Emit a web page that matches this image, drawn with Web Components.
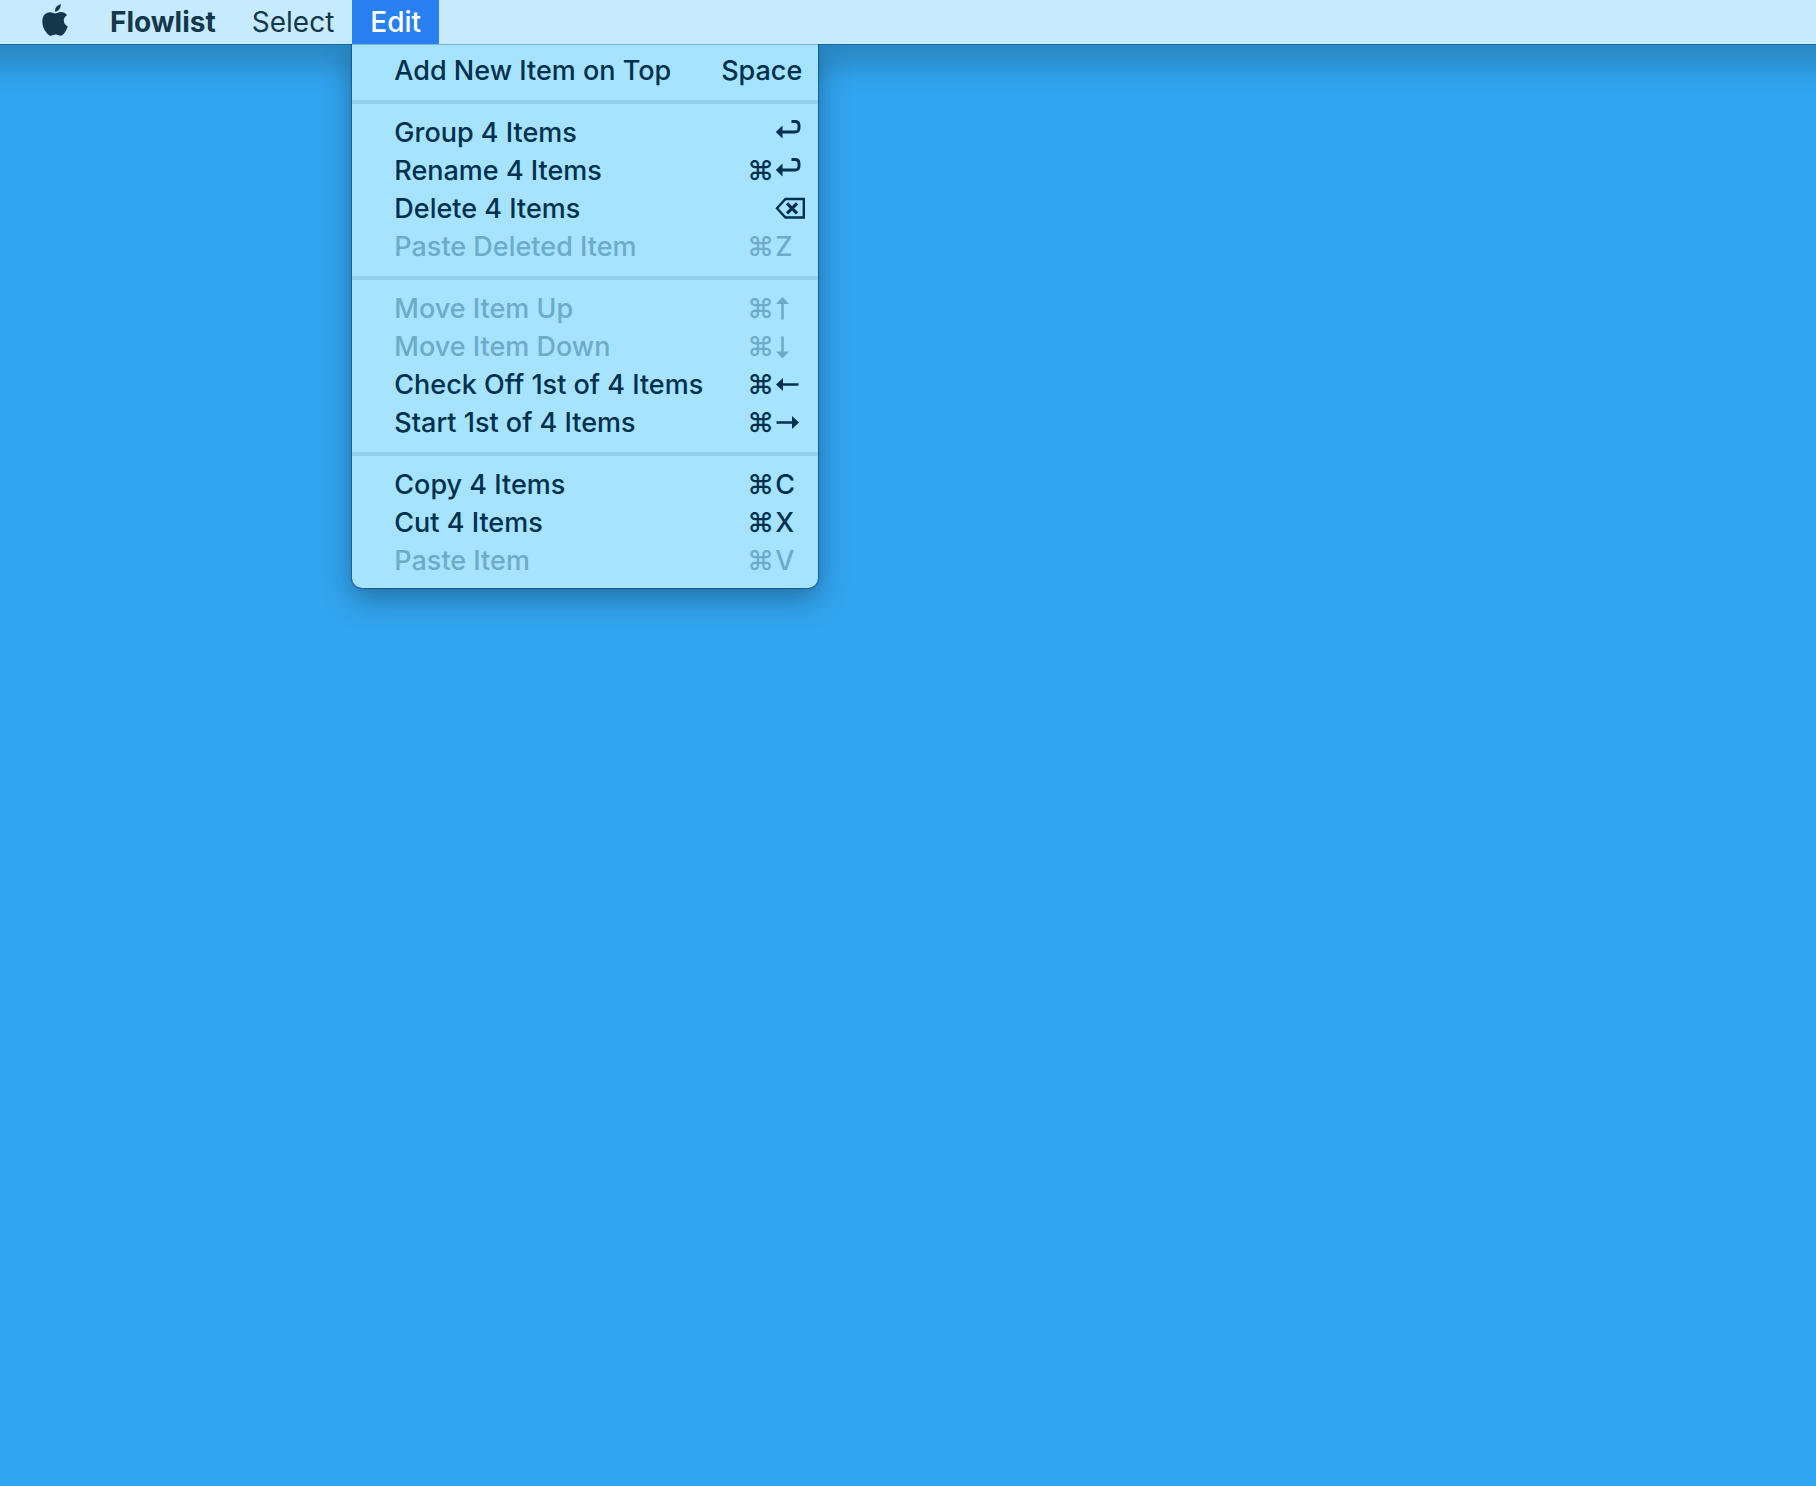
<!DOCTYPE html>
<html lang="en">
<head>
<meta charset="utf-8">
<title>Flowlist</title>
<style>
  html, body { height: 100%; }
  body {
    margin: 0;
    background: #32a5f0;
    font-family: Inter, "Liberation Sans", sans-serif;
    font-size: 28px;
    line-height: 38px;
    overflow: hidden;
  }
</style>
</head>
<body>
<menu-bar>
  <bar-item label="Apple"><apple-mark></apple-mark></bar-item>
  <bar-item class="app" strong>Flowlist</bar-item>
  <bar-item>Select</bar-item>
  <bar-item open>Edit
    <drop-menu slot="menu">
      <menu-command key="Space">Add New Item on Top</menu-command>
      <menu-divider></menu-divider>
      <menu-command icon="return">Group 4 Items</menu-command>
      <menu-command mod icon="return">Rename 4 Items</menu-command>
      <menu-command icon="delete">Delete 4 Items</menu-command>
      <menu-command mod key="Z" disabled>Paste Deleted Item</menu-command>
      <menu-divider></menu-divider>
      <menu-command mod icon="up" disabled>Move Item Up</menu-command>
      <menu-command mod icon="down" disabled>Move Item Down</menu-command>
      <menu-command mod icon="left">Check Off 1st of 4 Items</menu-command>
      <menu-command mod icon="right">Start 1st of 4 Items</menu-command>
      <menu-divider></menu-divider>
      <menu-command mod key="C">Copy 4 Items</menu-command>
      <menu-command mod key="X">Cut 4 Items</menu-command>
      <menu-command mod key="V" disabled>Paste Item</menu-command>
    </drop-menu>
  </bar-item>
</menu-bar>

<script>
const define = (name, render) => customElements.define(name, class extends HTMLElement {
  connectedCallback() {
    if (this.shadowRoot) return;
    this.attachShadow({ mode: 'open' }).innerHTML = render(this);
  }
});

define('menu-bar', () => `
  <style>
    :host {
      display: block;
      background: #c6ebff;
      color: #14384b;
      box-shadow: 0 1px 0 rgba(0, 30, 60, .3), 0 0 24px 24px rgba(0, 0, 0, .17);
    }
    nav { display: flex; height: 44px; padding-left: 24px; }
  </style>
  <nav aria-label="Menu bar"><slot></slot></nav>`);

define('bar-item', el => `
  <style>
    :host { display: block; position: relative; }
    button {
      display: flex; align-items: center;
      height: 44px; padding: 0 18px;
      border: 0; background: none; color: inherit;
      font: inherit; white-space: nowrap;
    }
    :host([strong]) button { font-weight: 700; }
    :host([open]) button { background: #2981f1; color: #fff; font-weight: 500; }
    ::slotted([slot="menu"]) { position: absolute; top: 44px; left: 0; }
  </style>
  <button type="button" ${el.hasAttribute('label') ? `aria-label="${el.getAttribute('label')}"` : ''}
    aria-haspopup="menu" aria-expanded="${el.hasAttribute('open')}"><slot></slot></button>
  <slot name="menu"></slot>`);

define('apple-mark', () => `
  <style>:host { display: block; padding: 0 6px 4px 0; } svg { display: block; fill: currentColor; }</style>
  <svg width="26" height="32" viewBox="0 0 26 32" aria-hidden="true">
    <path d="M18.8 .2c.2 2-.6 3.800-1.700 5.200-1.200 1.400-2.700 2.200-4.200 2.100-.1-1.900.7-3.700 1.800-5C15.900 1.200 17.500.4 18.800.2z"/>
    <path d="M25 11.200c-2 1.300-3.200 3-3.200 5.300 0 2.800 1.700 4.900 4 5.800-.6 2.100-1.700 4.200-3 6.100-1.200 1.700-2.400 3.300-4.400 3.300-1.900 0-2.500-1.100-4.800-1.100-2.200 0-3 1.100-4.800 1.100-2 .1-3.400-1.800-4.600-3.500C2.200 25.600.3 22 .3 17.400.3 12 3.600 8.300 7.900 8.300c2.100 0 3.800 1.200 5.200 1.200 1.300 0 3.400-1.400 6-1.400 2.200.1 4.500 1 5.900 3.100z"/>
  </svg>`);

define('drop-menu', () => `
  <style>
    :host {
      display: block; box-sizing: border-box;
      min-width: 466px; padding: 7px 0 8px;
      border-top: 1px solid #7ab6d3;
      border-radius: 0 0 10px 10px;
      background: #a5e3ff; color: #00304d;
      font-size: 27px; font-weight: 500;
      box-shadow: 0 0 1px 1px rgba(0, 30, 60, .4), 0 10px 30px rgba(0, 0, 0, .34);
      clip-path: inset(0 -60px -60px -60px);
    }
  </style>
  <div role="menu" aria-label="Edit"><slot></slot></div>`);

define('menu-divider', () => `
  <style>:host { display: block; height: 4px; margin: 10px 0; background: #95d1ed; }</style>`);

define('key-icon', el => {
  const shapes = {
    up: '<path d="M7.500 3v19.500" stroke-width="2.600"/><path class="f" d="M1 7 7.500 0 14 7z"/>',
    down: '<path d="M7.500 1.500v19.500" stroke-width="2.600"/><path class="f" d="M1 16.500 7.500 23.500 14 16.500z"/>',
    left: '<path d="M5 11.500h18.500" stroke-width="2.600"/><path class="f" d="M8 5 1 11.500 8 18z"/>',
    right: '<path d="M1.500 11.500H20" stroke-width="2.600"/><path class="f" d="M17 5l7 6.500-7 6.500z"/>',
    return: '<path d="M5 11h15q4 0 4-4V4.500Q24 .5 20 .5h-3.500" stroke-width="2.900"/><path class="f" d="M7.500 4.500.8 11 7.500 17.500z"/>',
    delete: '<path d="M10.500 2h18.300v18.500H10.500L2 11.250z" stroke-width="2.400"/><path d="M12 6.300l10 10M22 6.300l-10 10" stroke-width="3.200"/>'
  };
  return `
  <style>
    :host { display: block; }
    svg { display: block; overflow: visible; fill: none; stroke: currentColor; }
    .f { fill: currentColor; stroke: none; }
  </style>
  <svg width="27" height="25" viewBox="0 0 27 25" role="img" aria-label="${el.getAttribute('name')}">${shapes[el.getAttribute('name')]}</svg>`;
});

define('menu-command', el => {
  const icon = el.getAttribute('icon');
  return `
  <style>
    :host { display: block; }
    button {
      display: flex; align-items: center;
      width: 100%; height: 38px; padding: 0 16px 0 42px;
      border: 0; background: none; color: inherit;
      font: inherit; text-align: left; white-space: nowrap;
    }
    button:disabled { color: #6dabc8; }
    .label { flex: 1; padding-right: 40px; }
    .mod { width: 28px; }
    .key { min-width: 27px; }
  </style>
  <button type="button" role="menuitem" ${el.hasAttribute('disabled') ? 'disabled' : ''}>
    <span class="label"><slot></slot></span>
    ${el.hasAttribute('mod') ? '<span class="mod">⌘</span>' : ''}
    <span class="key">${icon ? `<key-icon name="${icon}"></key-icon>` : el.getAttribute('key')}</span>
  </button>`;
});
</script>
</body>
</html>
